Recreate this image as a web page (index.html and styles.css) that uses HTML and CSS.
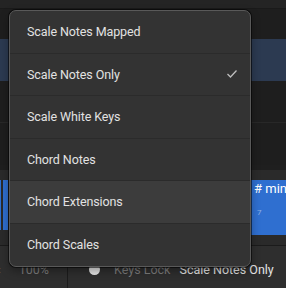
FILE: index.html
```html
<!DOCTYPE html>
<html>
<head>
  <meta charset="UTF-8">
  <title>Scale Mode Menu</title>
  <link rel="stylesheet" href="styles.css">
</head>
<body>
  <div class="app">
    <div class="toolbar"></div>
    <div class="row short"></div>
    <div class="row selected"></div>
    <div class="row lined"></div>
    <div class="row"></div>
    <div class="gap-dark"></div>
    <div class="ruler"></div>
    <div class="chord-track">
      <div class="chord-left">
        <span class="strip thin"></span>
        <span class="strip"></span>
      </div>
      <div class="chord-block">
        <span class="chord-name"># min7</span>
        <span class="chord-sub">7</span>
      </div>
    </div>
    <div class="track-foot"></div>
    <div class="status-bar">
      <div class="status-cell zoom">
        <span class="cut">‹</span>
        <span class="muted">100%</span>
      </div>
      <div class="status-cell keys">
        <span class="dot"></span>
        <span class="muted">Keys Lock</span>
        <span class="value">Scale Notes Only</span>
      </div>
    </div>

    <!-- dropdown menu -->
    <ul class="menu">
      <li class="menu-item">Scale Notes Mapped</li>
      <li class="menu-item checked">
        Scale Notes Only
        <svg class="check" width="12" height="10" viewBox="0 0 12 10">
          <polyline points="1.5,5 4.5,8 10.5,1.5" fill="none" stroke="#bdbdbd" stroke-width="1.3"/>
        </svg>
      </li>
      <li class="menu-item">Scale White Keys</li>
      <li class="menu-item">Chord Notes</li>
      <li class="menu-item hover">Chord Extensions</li>
      <li class="menu-item">Chord Scales</li>
    </ul>
  </div>
</body>
</html>
```

FILE: styles.css
```css
body {
  margin: 0;
  background: #1e1e1e;
  font-family: Roboto, "Noto Sans", sans-serif;
  overflow: hidden;
}
.app {
  position: relative;
  width: 286px;
  height: 288px;
  display: flex;
  flex-direction: column;
}
.app > div {
  flex-shrink: 0;
}
.toolbar {
  height: 8px;
  background: #242424;
  border-bottom: 1px solid #1a1a1a;
}
.row {
  height: 42px;
  background: #1e1e1e;
}
.row.short {
  height: 30px;
}
.row.selected {
  background: #2c3a51;
}
.row.lined {
  border-bottom: 1px solid #282828;
  height: 41px;
}
.gap-dark {
  height: 5px;
  background: #1f1f1f;
}
.ruler {
  height: 10px;
  background: #2a2a2a;
}
.chord-track {
  height: 55px;
  background: #2a2a2a;
  display: flex;
  justify-content: space-between;
}
.chord-left {
  display: flex;
  gap: 2px;
  height: 50px;
}
.strip {
  width: 5px;
  background: #2f6fd0;
}
.strip.thin {
  width: 1px;
}
.chord-block {
  width: 80px;
  background: #2f6fd0;
  display: flex;
  flex-direction: column;
  padding-left: 48px;
  box-sizing: border-box;
  overflow: hidden;
}
.chord-name {
  color: #fff;
  font-size: 13px;
  margin-top: 1px;
  white-space: nowrap;
}
.chord-sub {
  color: #8fb2e6;
  font-size: 8px;
  margin-top: 12px;
  padding-left: 3px;
}
.track-foot {
  height: 10px;
  background: #2a2a2a;
  border-bottom: 1px solid #1b1b1b;
}
.status-bar {
  flex: 1;
  display: flex;
  background: #2e2e2e;
  font-size: 12.5px;
  white-space: nowrap;
  overflow: hidden;
  padding-top: 4px;
}
.status-cell {
  display: flex;
  align-items: center;
  flex-shrink: 0;
}
.zoom {
  width: 71px;
  box-sizing: border-box;
  border-right: 1px solid #1c1c1c;
  gap: 18px;
  margin-left: -3px;
  margin-top: -4px;
  padding-top: 4px;
}
.keys {
  padding-left: 21px;
}
.muted {
  color: #7c7c7c;
}
.cut {
  color: #7c7c7c;
}
.dot {
  width: 11px;
  height: 11px;
  border-radius: 50%;
  background: #e6e6e6;
  margin-right: 14px;
}
.value {
  color: #e4e4e4;
  margin-left: 9px;
}
.menu {
  position: absolute;
  left: 9px;
  top: 10px;
  width: 242px;
  margin: 0;
  padding: 0;
  list-style: none;
  background: #333333;
  border: 1px solid #595959;
  border-radius: 7px;
  box-sizing: border-box;
  box-shadow: 0 0 0 1px rgba(0, 0, 0, 0.55), 0 4px 10px rgba(0, 0, 0, 0.35);
  overflow: hidden;
}
.menu-item {
  height: 42.5px;
  box-sizing: border-box;
  display: flex;
  align-items: center;
  justify-content: space-between;
  padding: 0 12px 0 17px;
  color: #e2e2e2;
  font-size: 12.5px;
  letter-spacing: -0.1px;
  border-bottom: 1px solid #2b2b2b;
}
.menu-item:last-child {
  border-bottom: none;
}
.menu-item.hover {
  background: #3c3c3c;
}
```
